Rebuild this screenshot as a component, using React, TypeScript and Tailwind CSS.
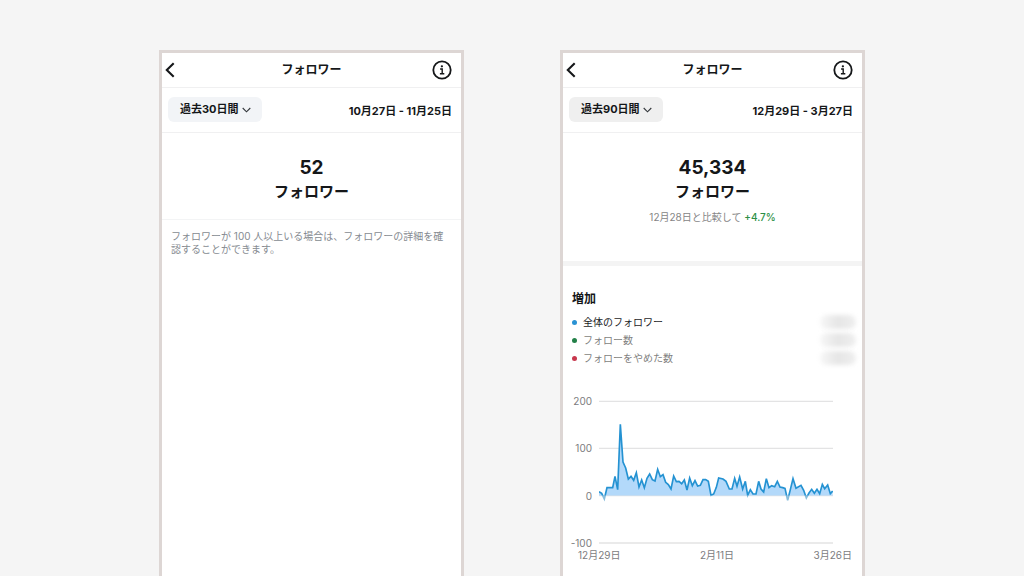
import type { ReactNode } from "react";

const SERIES: [number, number][] = [
  [0, 281], [8, 286], [16, 303], [24, 269], [32, 269], [41, 269], [48, 235], [56, 275], [64, 79], [72, 192],
  [80, 210], [88, 243], [96, 235], [104, 247], [112, 224], [120, 267], [128, 246], [136, 269], [144, 241],
  [152, 228], [160, 245], [168, 249], [176, 214], [184, 236], [192, 230], [200, 253], [208, 260], [216, 273],
  [224, 234], [232, 251], [240, 250], [248, 257], [256, 246], [264, 276], [272, 240], [280, 263], [288, 248],
  [296, 264], [304, 262], [312, 245], [320, 245], [328, 250], [336, 292], [344, 288], [352, 268], [359, 240],
  [372, 243], [381, 250], [391, 273], [399, 273], [407, 241], [414, 265], [422, 237], [431, 273], [439, 250],
  [446, 292], [454, 275], [462, 288], [471, 288], [479, 250], [486, 273], [494, 282], [502, 242], [510, 269],
  [518, 263], [527, 266], [535, 250], [543, 267], [551, 269], [558, 271], [566, 307], [574, 275], [582, 242],
  [591, 271], [606, 262], [614, 277], [622, 300], [630, 285], [638, 274], [646, 286], [654, 274], [662, 287],
  [670, 259], [677, 272], [686, 261], [694, 287], [701, 279],
];

const ZERO = 293;
const LINE = SERIES.map(([x, y]) => `${x},${y}`).join(" ");

function InfoIcon() {
  return (
    <svg width="20" height="20" viewBox="0 0 20 20" fill="none" stroke="#151719" aria-hidden="true">
      <circle cx="10" cy="10" r="8.7" strokeWidth="1.8" />
      <circle cx="9.9" cy="6.3" r="1.15" fill="#151719" stroke="none" />
      <path d="M8.1 9h2.1v4.7M7.9 13.8h4.4" strokeWidth="1.4" />
    </svg>
  );
}

type PanelProps = {
  id: string;
  days: string;
  range: string;
  count: string;
  buttonColor: string;
  children: ReactNode;
};

function Panel({ id, days, range, count, buttonColor, children }: PanelProps) {
  return (
    <section aria-labelledby={id} className="w-full max-w-[305px] border-[3px] border-b-0 border-[#ddd6d4] bg-white">
      <header className="flex h-[35px] items-center justify-between border-b border-[#f0f0f1] pl-[3px] pr-[9px]">
        <button type="button" aria-label="戻る" className="flex w-[26px] items-center">
          <svg width="10" height="16" viewBox="0 0 10 16" fill="none" stroke="#151719" strokeWidth="2.1" aria-hidden="true">
            <path d="M8.7 1.2 1.8 8l6.9 6.8" />
          </svg>
        </button>
        <h1 id={id} className="text-[12px] font-bold leading-4">フォロワー</h1>
        <button type="button" aria-label="詳細情報" className="flex">
          <InfoIcon />
        </button>
      </header>

      <div className="flex h-[45px] items-center justify-between border-b border-[#f0f0f1] pl-[6px] pr-[9px] pb-px text-[11px] font-bold">
        <button type="button" className={`flex h-[25px] items-center gap-[3px] rounded-md pl-3 pr-[11px] ${buttonColor}`}>
          <span>過去{days}日間</span>
          <svg width="9" height="6" viewBox="0 0 9 6" fill="none" stroke="#33373b" strokeWidth="1.1" aria-hidden="true">
            <path d="m.7 1 3.8 3.8L8.3 1" />
          </svg>
        </button>
        <p className="pt-[3px]">{range}</p>
      </div>

      <div className="pt-[23px] text-center">
        <p className="text-[19px] font-bold leading-6">{count}</p>
        <p className="text-[15px] font-bold leading-[23px]">フォロワー</p>
      </div>
      {children}
    </section>
  );
}

function LegendRow({ label, dot, text }: { label: string; dot: string; text: string }) {
  return (
    <li className="flex h-[18px] items-center justify-between">
      <span className={`flex items-center gap-[6px] ${text}`}>
        <span className={`size-[5px] rounded-full ${dot}`} />
        {label}
      </span>
      <span className="h-[14px] w-9 rounded-full bg-linear-to-r from-[#f7f7f7] via-[#e6e6e6] to-[#efefef] blur-[2px]" />
    </li>
  );
}

function GrowthChart() {
  return (
    <div className="mt-[31px] text-[10px] text-[#7c7c7e]">
      <div className="flex gap-[7px] pr-[29px]">
        <div className="flex w-[29px] shrink-0 flex-col justify-between text-right leading-[6px]">
          <span>200</span>
          <span>100</span>
          <span>0</span>
          <span>-100</span>
        </div>
        <svg viewBox="0 0 702 444" className="min-w-0 flex-1" role="img" aria-label="増加">
          <defs>
            <clipPath id="above"><rect x="-4" y="0" width="712" height={ZERO} /></clipPath>
            <clipPath id="below"><rect x="-4" y={ZERO} width="712" height="150" /></clipPath>
          </defs>
          <path d="M0 10H702M0 151H702M0 293H702M0 435H702" stroke="#e3e3e4" strokeWidth="4" />
          <polygon points={`0,${ZERO} ${LINE} 701,${ZERO}`} fill="#b3d9fa" clipPath="url(#above)" />
          <polyline points={LINE} fill="none" stroke="#2492d2" strokeWidth="5" clipPath="url(#above)" />
          <polyline points={LINE} fill="none" stroke="#86bcdb" strokeWidth="5" clipPath="url(#below)" />
        </svg>
      </div>
      <div className="mt-[3px] flex justify-between pl-[15px] pr-[10px] leading-3">
        <span>12月29日</span>
        <span>2月11日</span>
        <span>3月26日</span>
      </div>
    </div>
  );
}

export default function App() {
  return (
    <main className="flex min-h-screen justify-center gap-24 bg-[#f5f5f5] pt-[50px] font-['Inter','Noto_Sans_CJK_JP',sans-serif] text-[#151719]">
      <Panel id="month" days="30" range="10月27日 - 11月25日" count="52" buttonColor="bg-[#f2f4f7]">
        <p className="mt-4 border-t border-[#f3f4f5] px-[9px] pt-[10px] text-[10px] leading-[13px] text-[#868b91]">
          フォロワーが 100 人以上いる場合は、フォロワーの詳細を確<wbr />認することができます。
        </p>
      </Panel>

      <Panel id="quarter" days="90" range="12月29日 - 3月27日" count="45,334" buttonColor="bg-[#efefef]">
        <p className="mt-[5px] pb-[35px] text-center text-[10px] leading-[18px] text-[#858585]">
          12月28日と比較して <span className="font-medium text-[#2b8f45]">+4.7%</span>
        </p>
        <div className="border-t-[5px] border-[#f4f4f4] pt-6">
          <div className="pl-[9px] pr-[6px]">
            <h2 className="text-[12px] font-bold leading-[18px]">増加</h2>
            <ul className="mt-[5px] text-[10px]">
              <LegendRow label="全体のフォロワー" dot="bg-[#2a92d3]" text="text-[#1d1d1f]" />
              <LegendRow label="フォロー数" dot="bg-[#238048]" text="text-[#7f7f80]" />
              <LegendRow label="フォローをやめた数" dot="bg-[#c8384e]" text="text-[#7f7f80]" />
            </ul>
          </div>
          <GrowthChart />
        </div>
      </Panel>
    </main>
  );
}
